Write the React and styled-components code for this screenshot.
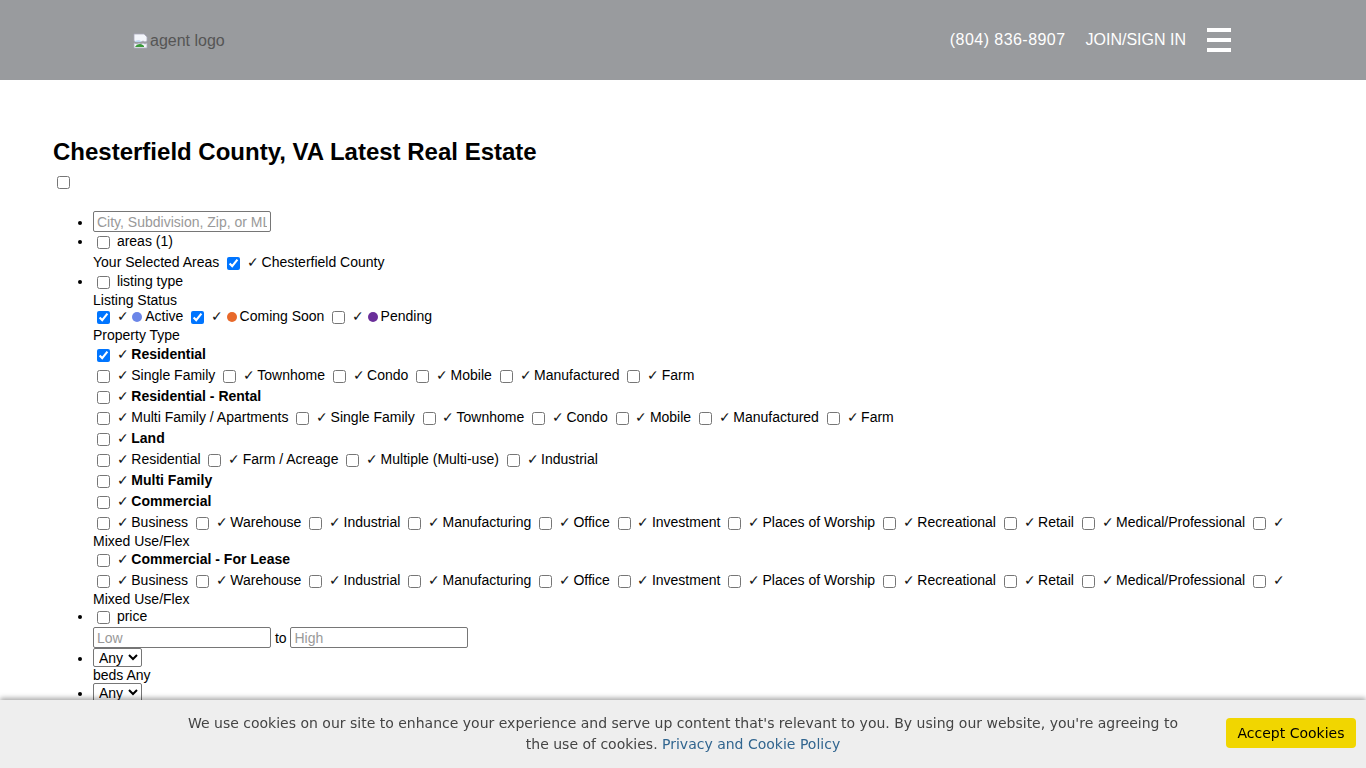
import React from "react";
import styled, { createGlobalStyle } from "styled-components";

const GlobalStyle = createGlobalStyle`
  body {
    margin: 0;
    font-family: "Liberation Sans", Arial, sans-serif;
    font-size: 14px;
    color: #000;
    background: #fff;
  }
`;

const Header = styled.header`
  height: 80px;
  background: #999b9e;
  display: flex;
  align-items: center;
  justify-content: space-between;
  padding: 0 135px 0 133px;
`;

const Logo = styled.div`
  display: flex;
  align-items: center;
  color: #555;
  font-size: 16px;
  margin-top: 1px;
`;

const NavRight = styled.nav`
  display: flex;
  align-items: center;
  gap: 20px;
  color: #fff;
  font-size: 16px;
`;

const NavLink = styled.span`
  color: #fff;
  letter-spacing: ${(p) => (p.$wide ? "0.45px" : "0")};
`;

const Burger = styled.div`
  display: flex;
  flex-direction: column;
  gap: 6px;
  width: 24px;
  margin-left: 1px;
  span {
    display: block;
    height: 4px;
    background: #fff;
  }
`;

const Main = styled.main`
  padding: 42px 53px 120px;
`;

const Title = styled.h2`
  font-size: 24px;
  font-weight: bold;
  margin: 16px 0 7px;
`;

const List = styled.ul`
  margin: 19px 0 17px;
  padding-left: 40px;
  list-style: disc;
`;

const Item = styled.li`
  margin-bottom: ${(p) => p.$after || 0}px;
`;

const Row = styled.div`
  padding: ${(p) => (p.$roomy ? "1px 0" : "0")};
  padding-top: ${(p) => (p.$top ? `${p.$top}px` : undefined)};
  padding-bottom: ${(p) => (p.$bottom ? `${p.$bottom}px` : undefined)};
`;

const Check = styled.input.attrs({ type: "checkbox" })`
  margin: 3px 3px 3px 4px;
  vertical-align: -3px;
`;

const Tick = styled.span`
  display: inline-block;
  width: 10.5px;
  font-family: "DejaVu Sans", sans-serif;
  font-weight: 200;
  font-size: 13.5px;
  line-height: 1;
  color: #111;
`;

const Strong = styled.b``;

const Dot = styled.span`
  display: inline-block;
  width: 10px;
  height: 10px;
  border-radius: 50%;
  background: ${(p) => p.$color};
  margin: 0 3px 0 1px;
  vertical-align: -1px;
`;

const TextInput = styled.input`
  width: 178px;
  height: 21px;
  box-sizing: border-box;
  font-family: "Liberation Sans", Arial, sans-serif;
  font-size: 14px;
  padding: 1px 3px;
  border: 1px solid #767676;
  border-radius: 2px;
  &::placeholder {
    color: #999;
  }
`;

const Select = styled.select`
  font-family: "Liberation Sans", Arial, sans-serif;
  font-size: 14px;
  height: 19px;
  padding: 0 1px;
  border: 1px solid #767676;
  border-radius: 2px;
  color: #000;
  background: #fff;
`;

const CookieBar = styled.div`
  position: fixed;
  left: 0;
  right: 0;
  bottom: 0;
  height: 68px;
  background: #eeeeee;
  box-shadow: 0 -2px 5px rgba(0, 0, 0, 0.35);
  display: grid;
  grid-template-columns: 140px 1fr 140px;
  align-items: center;
  font-family: "DejaVu Sans", Verdana, sans-serif;
`;

const CookieText = styled.p`
  margin: 0 auto;
  max-width: 1010px;
  text-align: center;
  font-size: 14px;
  line-height: 21px;
  color: #444;
  a {
    color: #31658f;
    text-decoration: none;
  }
`;

const AcceptButton = styled.button`
  justify-self: end;
  margin-right: 10px;
  width: 130px;
  height: 30px;
  border: none;
  border-radius: 4px;
  background: #f1d600;
  color: #000;
  font-family: "DejaVu Sans", Verdana, sans-serif;
  font-size: 14px;
  margin-top: -2px;
`;

const BrokenImage = () => (
  <svg width="16" height="16" viewBox="0 0 16 16" style={{ marginRight: 1 }}>
    <path d="M1 1h10l3 3v4l-2 1-2-1-2 1-2-1-2 1-3-1z" fill="#f4f6fb" stroke="#aab" strokeWidth="0.8" />
    <path d="M1 10l3 1 2-1 2 1 2-1 2 1 2-1v5H1z" fill="#f4f6fb" stroke="#aab" strokeWidth="0.8" />
    <path d="M2 14c1-2 3-3 5-3 2 0 3 1 4 2v1H2z" fill="#3c9a3c" />
    <path d="M2 8c2-1 4-1 6 0v1H2z" fill="#bcd5f0" />
  </svg>
);

const C = ({ checked, bold, children, dot }) => (
  <>
    <Check defaultChecked={checked} /> <Tick>✓</Tick> {dot && <Dot $color={dot} />}
    {bold ? <Strong>{children}</Strong> : children}{" "}
  </>
);

const commercial = [
  "Business",
  "Warehouse",
  "Industrial",
  "Manufacturing",
  "Office",
  "Investment",
  "Places of Worship",
  "Recreational",
  "Retail",
  "Medical/Professional",
  "Mixed Use/Flex",
];

const propertyGroups = [
  { name: "Residential", checked: true, types: ["Single Family", "Townhome", "Condo", "Mobile", "Manufactured", "Farm"] },
  {
    name: "Residential - Rental",
    types: ["Multi Family / Apartments", "Single Family", "Townhome", "Condo", "Mobile", "Manufactured", "Farm"],
  },
  { name: "Land", types: ["Residential", "Farm / Acreage", "Multiple (Multi-use)", "Industrial"] },
  { name: "Multi Family", types: [] },
  { name: "Commercial", types: commercial },
  { name: "Commercial - For Lease", types: commercial },
];

const App = () => {
  return (
    <>
      <GlobalStyle />
      <Header>
        <Logo>
          <BrokenImage />
          agent logo
        </Logo>
        <NavRight>
          <NavLink $wide>(804) 836-8907</NavLink>
          <NavLink>JOIN/SIGN IN</NavLink>
          <Burger>
            <span />
            <span />
            <span />
          </Burger>
        </NavRight>
      </Header>
      <Main>
        <Title>Chesterfield County, VA Latest Real Estate</Title>
        <Check />
        <List>
          <Item $after={1}>
            <TextInput placeholder="City, Subdivision, Zip, or MLS#" />
          </Item>
          <Item>
            <Check /> areas (1)
            <Row $top={2}>
              Your Selected Areas <Check defaultChecked /> <Tick>✓</Tick> Chesterfield County
            </Row>
          </Item>
          <Item>
            <Check /> listing type
            <Row>Listing Status</Row>
            <Row>
              <C checked dot="#6b86e8">Active</C>
              <C checked dot="#e8692a">Coming Soon</C>
              <C dot="#6a2f9a">Pending</C>
            </Row>
            <Row $bottom={2}>Property Type</Row>
            {propertyGroups.map((g) => (
              <React.Fragment key={g.name}>
                <Row $roomy>
                  <C checked={g.checked} bold>
                    {g.name}
                  </C>
                </Row>
                {g.types.length > 0 && (
                  <Row $roomy>
                    {g.types.map((t) => (
                      <C key={t}>{t}</C>
                    ))}
                  </Row>
                )}
              </React.Fragment>
            ))}
          </Item>
          <Item>
            <Check /> price
            <Row>
              <TextInput placeholder="Low" /> to <TextInput placeholder="High" />
            </Row>
          </Item>
          <Item>
            <Select defaultValue="any">
              <option value="any">Any</option>
            </Select>
            <Row>beds Any</Row>
          </Item>
          <Item>
            <Select defaultValue="any">
              <option value="any">Any</option>
            </Select>
            <Row>baths Any</Row>
          </Item>
        </List>
      </Main>
      <CookieBar>
        <span />
        <CookieText>
          We use cookies on our site to enhance your experience and serve up content that's relevant to you. By using our
          website, you're agreeing to the use of cookies. <a href="#policy">Privacy and Cookie Policy</a>
        </CookieText>
        <AcceptButton>Accept Cookies</AcceptButton>
      </CookieBar>
    </>
  );
};

export default App;
